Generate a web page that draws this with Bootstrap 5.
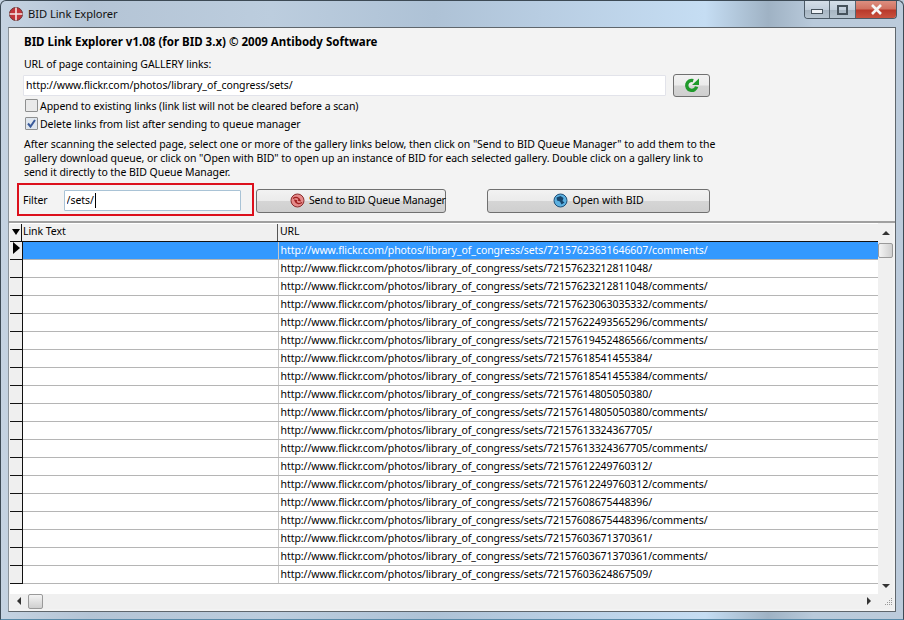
<!DOCTYPE html>
<html lang="en">
<head>
<meta charset="UTF-8">
<title>BID Link Explorer</title>
<link href="https://cdn.jsdelivr.net/npm/bootstrap@5.3.0/dist/css/bootstrap.min.css" rel="stylesheet">
<style>
html, body { height: 620px; overflow: hidden; }
body { font-family: "Noto Sans", "Liberation Sans", sans-serif; font-size: 10.5px; letter-spacing: -0.06px; line-height: 14px; color: #000; width: 904px;
  background: linear-gradient(90deg, #c5d3e2 0, #b4c4d5 10%, #bccdde 30%, #aec2d6 48%, #b8cde2 60%, #c5ddf3 78%, #9fb2c4 85%, #b9cadb 90%, #bccbdb 100%); }
.win-frame { height: 620px; padding: 0 7px 7px 7px; border: 1px solid #3d4a55; border-bottom-color: #5a8aa8; border-radius: 6px 6px 0 0; }
.win-title { height: 26px; font-size: 11.2px; color: #111; }
.win-caption { padding-top: 5px; }
.win-btns { width: 93px; height: 18px; margin-right: -1px; border: 1px solid #4c5a66; border-top: 0; border-radius: 0 0 4px 4px; overflow: hidden; }
.win-btn { height: 17px; border-right: 1px solid #56646f; background: linear-gradient(#d4dee8 0, #c2cfdc 50%, #a7b5c2 52%, #b6c4d0 100%); }
.win-btn.b-min { width: 25px; }
.win-btn.b-max { width: 26px; }
.win-btn.b-close { flex: 1; border: 0; color: #fff; background: linear-gradient(#dd8f80 0, #d0705f 48%, #b8382a 52%, #c9523f 100%); }
.client { height: 586px; background: #f3f3f3; border: 1px solid #5f666c; border-left-color: #8c949b; }
.top-pane { height: 193px; flex: none; padding: 7px 0 0 15px; }
.app-head { font-weight: 700; font-size: 11.5px; letter-spacing: 0; height: 14px; }
.url-label { margin-top: 8px; }
.url-row { margin-top: 3px; height: 23px; }
.url-input, .filter-input { font: inherit; letter-spacing: inherit; padding: 0 2px; border-radius: 1px; color: #000; box-shadow: none; }
.url-input { width: 643px; height: 21px; margin-left: -1px; border: 1px solid #e2e3ea; }
.btn-go { width: 37px; height: 23px; margin-left: 7px; padding: 0; border: 1px solid #707070; border-radius: 3px;
  background: linear-gradient(#f2f2f2 0, #ebebeb 48%, #d5d5d5 52%, #cfcfcf 100%); }
.chk-row { height: 18px; }
.chk-row .form-check-input { width: 13px; height: 13px; margin: 0 2px 0 1px; border-radius: 1px; border: 1px solid #8e8f8f; background-color: #e9e9e9; float: none; }
.chk-row .form-check-input:checked { background-color: #dfe6ee; border-color: #8e8f8f;
  background-image: url("data:image/svg+xml,%3csvg xmlns='http://www.w3.org/2000/svg' viewBox='0 0 13 13'%3e%3cpath fill='none' stroke='%233a5a9a' stroke-width='2' d='M3 6.5l2.5 3L10 3'/%3e%3c/svg%3e"); background-size: 13px; }
.help-text { margin-top: 4px; width: 692px; }
.filter-box { width: 237px; height: 33px; margin-left: -7px; padding: 2px 0 0 4px; border: 2px solid #dc101c; }
.filter-field { width: 177px; margin-left: 16px; }
.filter-input { width: 177px; height: 21px; border: 1px solid #a9c3d6; }
.text-caret { position: absolute; left: 31px; top: 3px; width: 1px; height: 15px; background: #000; }
.filter-row { margin-top: 4px; height: 33px; }
.act-btn { height: 24px; padding: 0; font-size: 10.5px; letter-spacing: -0.06px; color: #000; border: 1px solid #707070; border-radius: 3px;
  background: linear-gradient(#f2f2f2 0, #ebebeb 48%, #d5d5d5 52%, #cfcfcf 100%); }
.act-btn svg { flex: none; }
.b-send { width: 190px; margin-left: 2px; margin-top: 6px; padding-left: 33px; white-space: nowrap; letter-spacing: -0.18px; }
.b-open { width: 223px; margin-left: 41px; margin-top: 6px; }
.grid-wrap { border-top: 2px solid #a0a0a0; padding: 0 2px 0 1px; flex: 1; }
.grid-head { height: 19px; background: #f0f0f0; border-top: 1px solid #fff; border-bottom: 1px solid #111; }
.ind-col { width: 12px; flex: none; border-right: 1px solid #111; }
.txt-col { width: 256px; flex: none; padding-left: 1px; }
.url-col { flex: 1; padding-left: 2px; }
.grid-head .txt-col { border-right: 1px solid #555; }
.grid-body { width: 868px; height: 371px; background: #fff; }
.link-table { table-layout: fixed; width: 868px; margin: 0; }
.link-table td { height: 18px; padding: 0 0 0 2px; line-height: 17px; border: 0; border-bottom: 1px solid #b5b5b5; white-space: nowrap; overflow: hidden; color: #000; background: #fff; }
.link-table td.c-ind { width: 12px; padding: 0; background: #efefef; border-right: 1px solid #111; border-bottom: 1px solid #111; }
.link-table td.c-txt { width: 256px; border-right: 1px solid #c8c8c8; }
.link-table tr.sel td { background: #3399ff; color: #fff; }
.link-table tr.sel td.c-ind { background: #efefef; }
.vscroll { width: 16px; height: 371px; background: #f0f0f0; }
.v-arrow-up { height: 20px; }
.v-arrow-down { height: 16px; }
.v-thumb { width: 15px; height: 15px; border: 1px solid #9a9a9a; border-radius: 2px; background: linear-gradient(90deg, #f4f4f4, #cfcfcf); }
.hscroll { height: 15px; background: #f0f0f0; margin-right: -1px; }
.h-arrow { width: 17px; }
.h-thumb { width: 15px; height: 15px; margin-left: 1px; border: 1px solid #9a9a9a; border-radius: 2px; background: linear-gradient(#f4f4f4, #cfcfcf); }
.tri { width: 0; height: 0; border-style: solid; border-color: transparent; }
.tri-down { border-width: 6px 4px 0 4px; border-top-color: #000; }
.tri-up-s { border-width: 0 4px 4px 4px; border-bottom-color: #333; }
.tri-down-s { border-width: 4px 4px 0 4px; border-top-color: #333; }
.tri-left-s { border-width: 4px 4px 4px 0; border-right-color: #333; }
.tri-right-s { border-width: 4px 0 4px 4px; border-left-color: #333; margin-right: 13px; }
.tri-row { border-width: 6px 0 6px 7px; border-left-color: #000; margin-left: 3px; }
.grip { margin-right: 1px; }
</style>
</head>
<body>
<div class="win-frame d-flex flex-column">
  <div class="win-title d-flex align-items-start">
    <div class="win-caption d-flex align-items-center gap-1">
      <svg width="16" height="16" viewBox="0 0 16 16"><circle cx="8" cy="8" r="6.5" fill="#c2343a" stroke="#6a3030"/><path d="M8 1.5v13M1.5 8h13" stroke="#f4e6e6" stroke-width="1.6"/></svg>
      <span>BID Link Explorer</span>
    </div>
    <div class="win-btns d-flex ms-auto">
      <div class="win-btn b-min d-flex align-items-end justify-content-center pb-1"><svg width="12" height="5"><rect x=".5" y=".5" width="11" height="4" fill="#eef2f6" stroke="#46525c"/></svg></div>
      <div class="win-btn b-max d-flex align-items-center justify-content-center"><svg width="11" height="10"><rect x="1" y="1" width="9" height="8" fill="none" stroke="#46525c" stroke-width="2"/></svg></div>
      <div class="win-btn b-close d-flex align-items-center justify-content-center"><svg width="13" height="11" viewBox="0 0 13 11"><path d="M2 1l9 9M11 1l-9 9" stroke="#f6f6f6" stroke-width="2.6"/></svg></div>
    </div>
  </div>
  <div class="client d-flex flex-column">
    <div class="top-pane">
      <div class="app-head">BID Link Explorer v1.08 (for BID 3.x) © 2009 Antibody Software</div>
      <div class="url-label">URL of page containing GALLERY links:</div>
      <div class="url-row d-flex align-items-center">
        <input class="form-control url-input" type="text" value="http://www.flickr.com/photos/library_of_congress/sets/">
        <button class="btn btn-go d-flex align-items-center justify-content-center" type="button">
          <svg width="16" height="16" viewBox="0 0 16 16"><path d="M12.6 9.6A5 5 0 1 1 9.2 3.6" fill="none" stroke="#1f9a2b" stroke-width="3.4"/><path d="M8 8h7V1.5z" fill="#1f9a2b"/></svg>
        </button>
      </div>
      <div class="chk-row d-flex align-items-center"><input class="form-check-input" type="checkbox"><span>Append to existing links (link list will not be cleared before a scan)</span></div>
      <div class="chk-row d-flex align-items-center"><input class="form-check-input" type="checkbox" checked><span>Delete links from list after sending to queue manager</span></div>
      <div class="help-text">After scanning the selected page, select one or more of the gallery links below, then click on "Send to BID Queue Manager" to add them to the gallery download queue, or click on "Open with BID" to open up an instance of BID for each selected gallery. Double click on a gallery link to send it directly to the BID Queue Manager.</div>
      <div class="filter-row d-flex align-items-start">
        <div class="filter-box d-flex align-items-center"><span>Filter</span>
          <div class="filter-field position-relative"><input class="form-control filter-input" type="text" value="/sets/"><div class="text-caret"></div></div>
        </div>
        <button class="btn act-btn b-send d-flex align-items-center gap-1" type="button">
          <svg width="15" height="15" viewBox="0 0 15 15"><circle cx="7.5" cy="7.5" r="6.5" fill="#e58a8a" stroke="#8a2b2b"/><path d="M3 5.5c3-2 6-1 7 2l-2-.5M12 9.5c-3 2-6 1-7-2l2 .5" fill="none" stroke="#9e1f1f" stroke-width="1.3"/></svg>
          <span>Send to BID Queue Manager</span>
        </button>
        <button class="btn act-btn b-open d-flex align-items-center justify-content-center gap-1" type="button">
          <svg width="15" height="15" viewBox="0 0 15 15"><circle cx="7.5" cy="7.5" r="6.5" fill="#5cb0e0" stroke="#1d4f78"/><path d="M3.5 4.5l4-1.5 3 2-1 3 2 1.5-3 2-1.5-3-3-1z" fill="#17456b"/></svg>
          <span>Open with BID</span>
        </button>
      </div>
    </div>
    <div class="grid-wrap">
      <div class="d-flex">
        <div class="grid-body">
          <div class="grid-head d-flex">
            <div class="ind-col d-flex align-items-center justify-content-center"><div class="tri tri-down"></div></div>
            <div class="txt-col">Link Text</div>
            <div class="url-col">URL</div>
          </div>
          <table class="table link-table"><tbody id="rows"></tbody></table>
        </div>
        <div class="vscroll d-flex flex-column align-items-center">
          <div class="v-arrow-up d-flex align-items-center justify-content-center"><div class="tri tri-up-s"></div></div>
          <div class="v-thumb"></div>
          <div class="v-arrow-down d-flex align-items-center justify-content-center mt-auto"><div class="tri tri-down-s"></div></div>
        </div>
      </div>
      <div class="hscroll d-flex align-items-center">
        <div class="h-arrow d-flex align-items-center justify-content-center"><div class="tri tri-left-s"></div></div>
        <div class="h-thumb"></div>
        <div class="tri tri-right-s ms-auto"></div>
        <svg class="grip" width="9" height="9" viewBox="0 0 9 9"><path d="M7 1h1v1H7zM5 3h1v1H5zM7 3h1v1H7zM3 5h1v1H3zM5 5h1v1H5zM7 5h1v1H7zM1 7h1v1H1zM3 7h1v1H3zM5 7h1v1H5zM7 7h1v1H7z" fill="#999"/></svg>
      </div>
    </div>
  </div>
</div>
<script src="https://cdn.jsdelivr.net/npm/bootstrap@5.3.0/dist/js/bootstrap.bundle.min.js"></script>
<script>
var base = "http://www.flickr.com/photos/library_of_congress/sets/";
var links = ["72157623631646607/comments/","72157623212811048/","72157623212811048/comments/","72157623063035332/comments/","72157622493565296/comments/","72157619452486566/comments/","72157618541455384/","72157618541455384/comments/","72157614805050380/","72157614805050380/comments/","72157613324367705/","72157613324367705/comments/","72157612249760312/","72157612249760312/comments/","72157608675448396/","72157608675448396/comments/","72157603671370361/","72157603671370361/comments/","72157603624867509/"];
var html = "";
links.forEach(function (l, i) {
  var mark = i == 0 ? '<div class="tri tri-row"></div>' : "";
  html += '<tr class="' + (i == 0 ? "sel" : "") + '"><td class="c-ind">' + mark + '</td><td class="c-txt"></td><td>' + base + l + '</td></tr>';
});
document.getElementById("rows").innerHTML = html;
</script>
</body>
</html>
